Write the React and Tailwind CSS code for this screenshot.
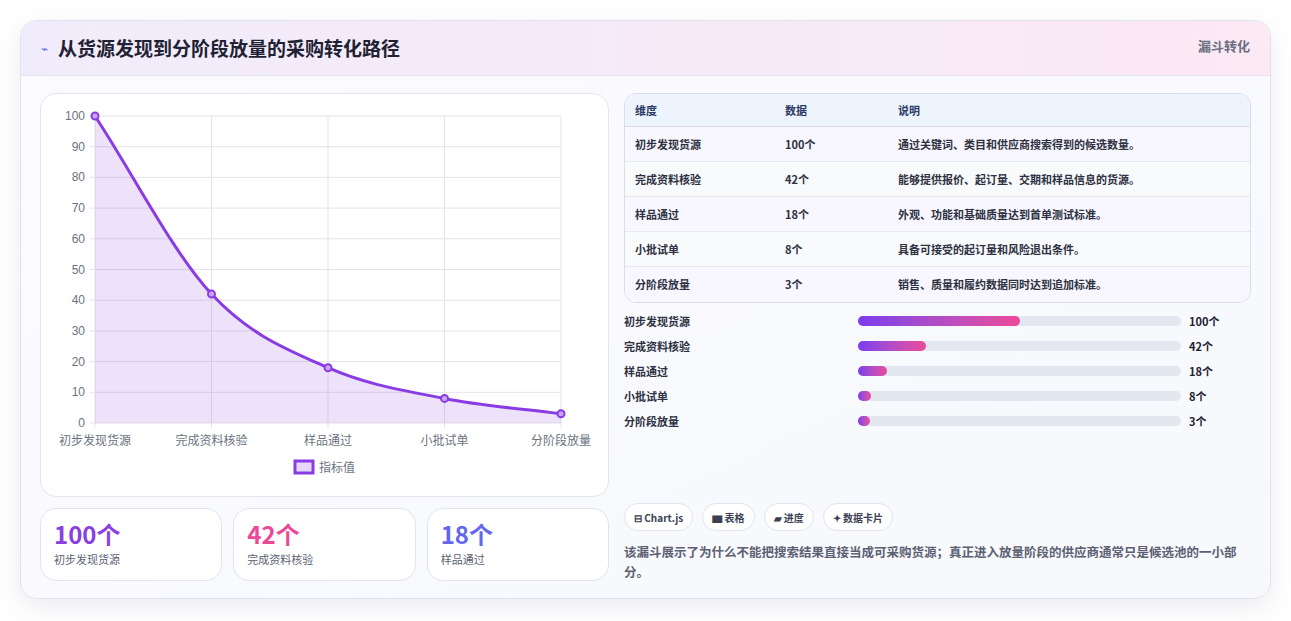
import React from 'react';

const rows = [
  ['初步发现货源', 100, '通过关键词、类目和供应商搜索得到的候选数量。'],
  ['完成资料核验', 42, '能够提供报价、起订量、交期和样品信息的货源。'],
  ['样品通过', 18, '外观、功能和基础质量达到首单测试标准。'],
  ['小批试单', 8, '具备可接受的起订量和风险退出条件。'],
  ['分阶段放量', 3, '销售、质量和履约数据同时达到追加标准。'],
];

const Chart = () => {
  // plot area in svg coords
  const x0 = 54, x1 = 520, y0 = 22, y1 = 329;
  const xs = rows.map((_, i) => x0 + (i * (x1 - x0)) / 4);
  const ys = rows.map((r) => y1 - (r[1] / 100) * (y1 - y0));
  // monotone-ish bezier
  let d = `M${xs[0]},${ys[0]}`;
  for (let i = 0; i < 4; i++) {
    const dx = (xs[i + 1] - xs[i]) / 3;
    const s0 = i === 0 ? (ys[1] - ys[0]) / (xs[1] - xs[0]) : (ys[i + 1] - ys[i - 1]) / (xs[i + 1] - xs[i - 1]);
    const s1 = i === 3 ? (ys[4] - ys[3]) / (xs[4] - xs[3]) : (ys[i + 2] - ys[i]) / (xs[i + 2] - xs[i]);
    d += ` C${xs[i] + dx},${ys[i] + s0 * dx} ${xs[i + 1] - dx},${ys[i + 1] - s1 * dx} ${xs[i + 1]},${ys[i + 1]}`;
  }
  return (
    <svg width="566" height="402" className="block" style={{ fontFamily: '"Liberation Sans", sans-serif' }}>
      {Array.from({ length: 11 }).map((_, i) => {
        const y = y1 - (i * (y1 - y0)) / 10;
        return (
          <g key={i}>
            <line x1={x0 - 5} x2={x1} y1={y} y2={y} stroke="#e3e3ec" />
            <text x={x0 - 10} y={y + 4} textAnchor="end" fontSize="12" fill="#6b7280">{i * 10}</text>
          </g>
        );
      })}
      {xs.map((x, i) => (
        <g key={i}>
          <line x1={x} x2={x} y1={y0} y2={y1 + 5} stroke="#e3e3ec" />
          <text x={x} y={y1 + 22} textAnchor="middle" fontSize="12" fill="#6b7280" style={{ fontFamily: '"Noto Sans CJK SC", sans-serif' }}>{rows[i][0]}</text>
        </g>
      ))}
      <path d={`${d} L${x1},${y1} L${x0},${y1} Z`} fill="#8b3fe3" fillOpacity="0.15" />
      <path d={d} fill="none" stroke="#8a3ce4" strokeWidth="3" />
      {xs.map((x, i) => (
        <circle key={i} cx={x} cy={ys[i]} r="3.5" fill="#c9a6f5" stroke="#8a3ce4" strokeWidth="2" />
      ))}
      <rect x="254" y="367" width="18" height="12" fill="#e7d8fb" stroke="#8a3ce4" strokeWidth="3" />
      <text x="278" y="378" fontSize="12" fill="#6b7280" style={{ fontFamily: '"Noto Sans CJK SC", sans-serif' }}>指标值</text>
    </svg>
  );
};

export default function App() {
  return (
    <div className="w-[1291px] h-[621px] bg-white p-5 pb-0" style={{ fontFamily: '"Noto Sans CJK SC", sans-serif' }}>
      <div className="h-[579px] rounded-2xl border border-[#e2e3ef] bg-gradient-to-br from-[#fbfaff] to-[#f7f9fd] shadow-[0_8px_24px_rgba(100,100,140,0.12)] overflow-hidden">
        <div className="h-[55px] flex items-center justify-between px-5 bg-gradient-to-r from-[#f1ecfb] to-[#fbe9f4] border-b border-[#e5e3f2]">
          <div className="flex items-center gap-2.5">
            <span className="text-[#6366f1] text-xs">⌁</span>
            <h1 className="text-[19px] font-bold text-[#1f2233]">从货源发现到分阶段放量的采购转化路径</h1>
          </div>
          <span className="self-start mt-[15px] text-[13px] font-bold text-[#6b6f80]">漏斗转化</span>
        </div>
        <div className="flex gap-[15px] px-[19px] pt-[17px]">
          <div className="w-[569px]">
            <div className="h-[404px] bg-white rounded-2xl border border-[#e3e5ef]">
              <Chart />
            </div>
            <div className="grid grid-cols-3 gap-[11px] mt-[11px]">
              {[['100个', '初步发现货源', 'text-[#8b3fe3]'], ['42个', '完成资料核验', 'text-[#ec4899]'], ['18个', '样品通过', 'text-[#6366f1]']].map(([v, l, c]) => (
                <div key={l} className="h-[73px] rounded-2xl border border-[#e0e4f0] bg-white px-[13px] pt-[10px]">
                  <div className={`text-[24px] leading-[30px] font-bold ${c}`}>{v}</div>
                  <div className="text-[11px] text-[#5b6172] mt-0.5">{l}</div>
                </div>
              ))}
            </div>
          </div>
          <div className="flex-1 flex flex-col">
            <div className="rounded-xl border border-[#d9dde8] overflow-hidden bg-white text-[11px] font-bold text-[#2d3142]">
              <div className="flex h-[33px] items-center bg-[#eef4fd] text-[#2a3a66] border-b border-[#d9dde8]">
                <div className="w-[150px] pl-[10px]">维度</div><div className="w-[113px] pl-[10px]">数据</div><div className="pl-[10px]">说明</div>
              </div>
              {rows.map(([a, b, c], i) => (
                <div key={a} className={`flex h-[35px] items-center ${i < 4 ? 'border-b border-[#e6e8f0]' : ''} ${i % 2 ? 'bg-[#f9fafc]' : 'bg-[#f8f6fe]'}`}>
                  <div className="w-[150px] pl-[10px]">{a}</div><div className="w-[113px] pl-[10px]">{b}个</div><div className="pl-[10px]">{c}</div>
                </div>
              ))}
            </div>
            <div className="mt-[12px] flex flex-col gap-[13px]">
              {rows.map(([a, b]) => (
                <div key={a} className="flex items-center h-[12px] text-[11px] font-bold">
                  <div className="w-[234px] text-[#2d3142]">{a}</div>
                  <div className="w-[323px] h-[10px] rounded-full bg-[#e3e7ef]">
                    <div className="h-full rounded-full bg-gradient-to-r from-[#7c3aed] to-[#ec4899]" style={{ width: `${Math.max(b / 2, 3.6)}%` }} />
                  </div>
                  <div className="ml-2 text-[#1f2233]">{b}个</div>
                </div>
              ))}
            </div>
            <div className="mt-[76px] flex gap-[9px]">
              {['⊟ Chart.js', '▆ 表格', '▰ 进度', '✦ 数据卡片'].map((t) => (
                <span key={t} className="h-[28px] px-[9px] flex items-center rounded-full border border-[#e2e4ee] bg-white text-[10px] font-bold text-[#3a3f52]">{t}</span>
              ))}
            </div>
            <p className="mt-[11px] text-[12.5px] leading-[20px] font-bold text-[#5b6172]">该漏斗展示了为什么不能把搜索结果直接当成可采购货源；真正进入放量阶段的供应商通常只是候选池的一小部分。</p>
          </div>
        </div>
      </div>
    </div>
  );
}
